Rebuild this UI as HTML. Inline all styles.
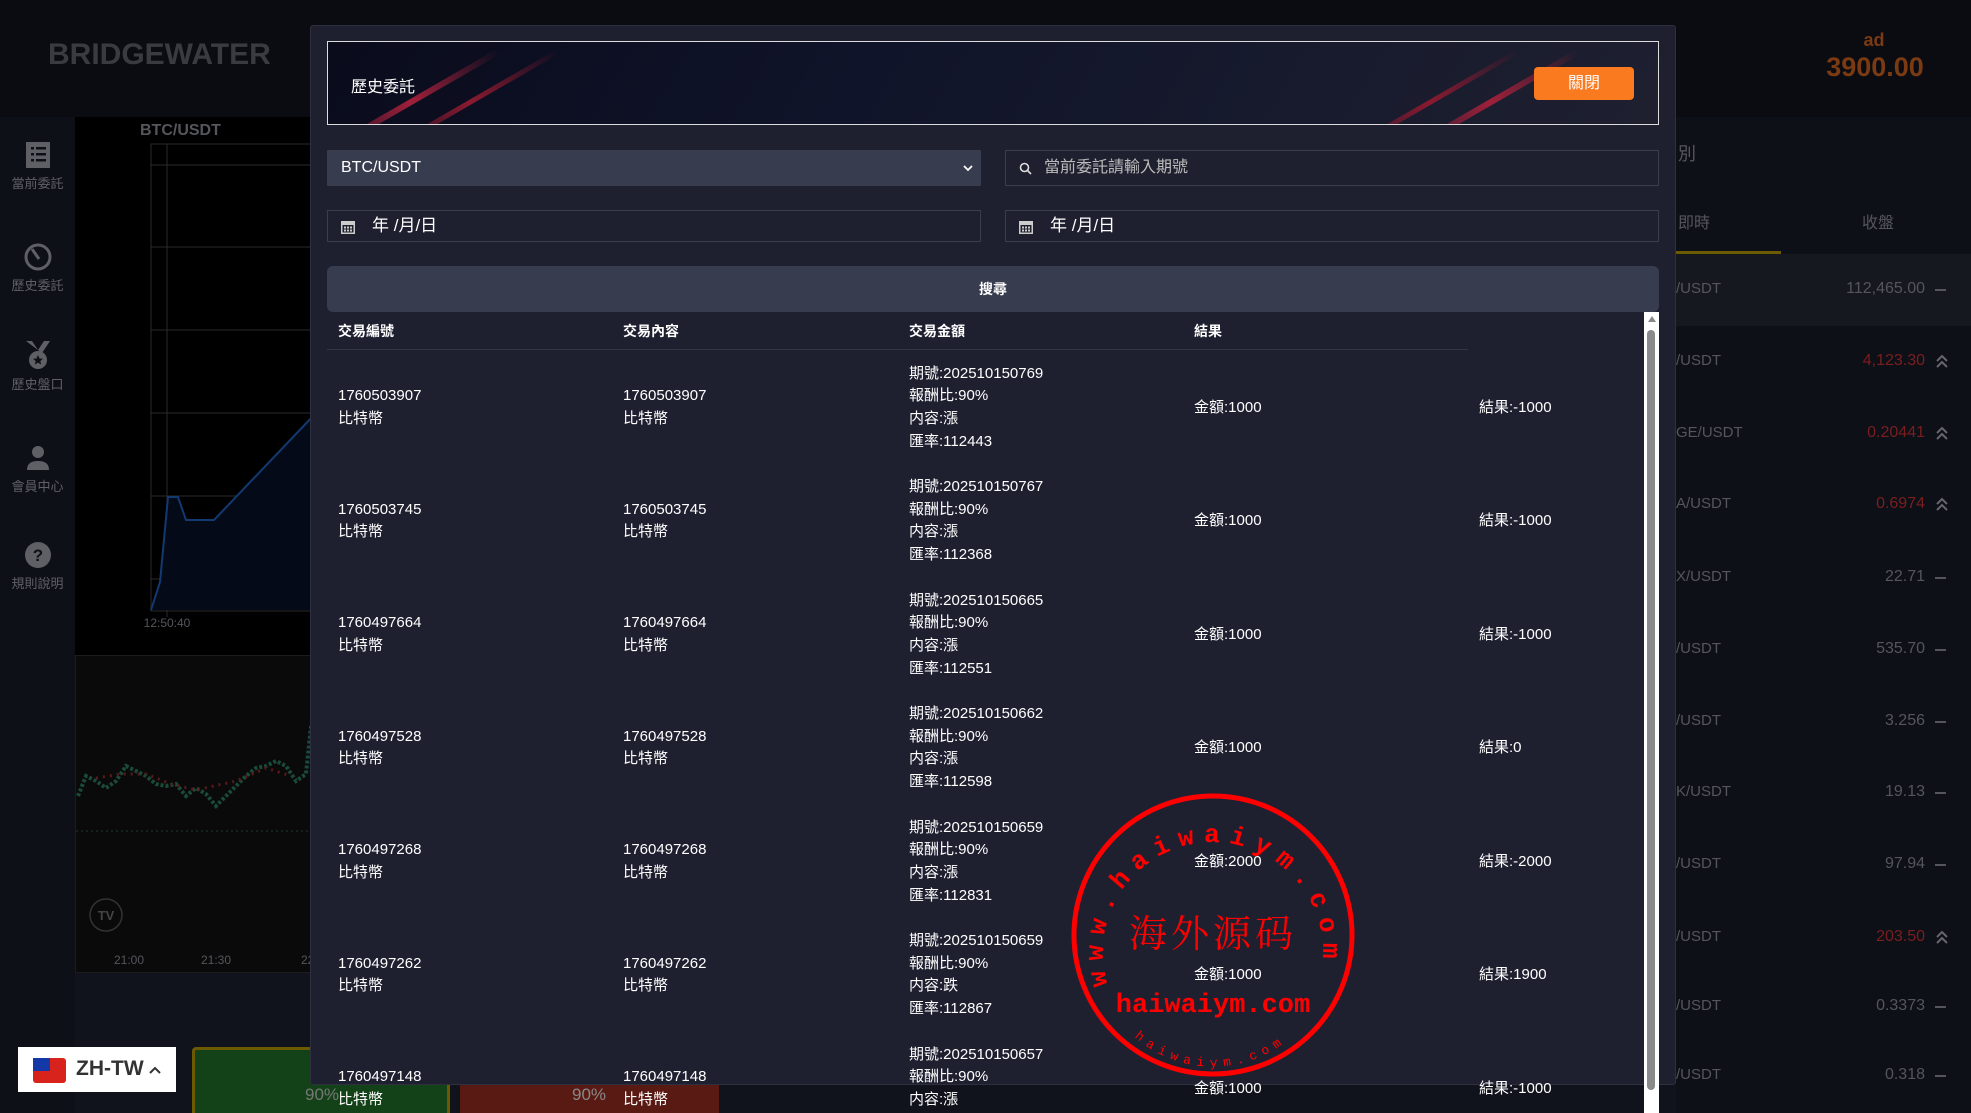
<!DOCTYPE html>
<html><head><meta charset="utf-8"><style>
*{margin:0;padding:0;box-sizing:border-box}
html,body{width:1971px;height:1113px;overflow:hidden}
body{background:#11131c;font-family:"Liberation Sans","Noto Sans CJK TC",sans-serif;position:relative;color:#fff}
.a{position:absolute}
.side{left:0;top:117px;width:75px;height:996px;background:#0e1018}
.si{position:absolute;left:0;width:75px;text-align:center;color:#5f6066;font-size:13px}
.t{font-size:15px;color:#fff;position:absolute;white-space:nowrap;line-height:22.6px}
.rp{color:#55565c;font-size:15px;position:absolute}
</style></head><body>
<div class="a" style="left:0;top:0;width:1971px;height:117px;background:#0b0c12"></div>
<div class="a" style="left:48px;top:38px;font-size:30px;font-weight:bold;color:#3a3b40">BRIDGEWATER</div>
<div class="a" style="left:1830px;top:30px;width:88px;text-align:center;color:#7a3a12;font-weight:bold;font-size:18px">ad</div>
<div class="a" style="left:1820px;top:52px;width:110px;text-align:center;color:#7a3a12;font-weight:bold;font-size:27px">3900.00</div>
<div class="a side"></div>
<div class="si" style="top:142px"><svg width="28" height="28"><rect x="2" y="0" width="24" height="26" fill="#5f6066"/><g fill="#0e1018"><rect x="7" y="5" width="3" height="2.5"/><rect x="12" y="5" width="10" height="2.5"/><rect x="7" y="11" width="3" height="2.5"/><rect x="12" y="11" width="10" height="2.5"/><rect x="7" y="17" width="3" height="2.5"/><rect x="12" y="17" width="10" height="2.5"/></g></svg><div>當前委託</div></div>
<div class="si" style="top:242px"><svg width="30" height="30"><circle cx="15" cy="15" r="12" fill="none" stroke="#5f6066" stroke-width="3"/><path d="M9 7 L16 17" stroke="#5f6066" stroke-width="3"/></svg><div>歷史委託</div></div>
<div class="si" style="top:341px"><svg width="30" height="30"><path d="M3 0h6l6 9 6-9h6l-8 12z" fill="#5f6066"/><circle cx="15" cy="19" r="9" fill="#5f6066"/><path d="M15 14l1.5 3.5 3.5.3-2.7 2.3.9 3.5-3.2-2-3.2 2 .9-3.5-2.7-2.3 3.5-.3z" fill="#0e1018"/></svg><div>歷史盤口</div></div>
<div class="si" style="top:443px"><svg width="30" height="30"><circle cx="15" cy="9" r="6" fill="#5f6066"/><path d="M4 27c0-7 5-9 11-9s11 2 11 9z" fill="#5f6066"/></svg><div>會員中心</div></div>
<div class="si" style="top:540px"><svg width="30" height="30"><circle cx="15" cy="15" r="13" fill="#5f6066"/><text x="15" y="21" text-anchor="middle" font-size="17" font-weight="bold" fill="#0e1018" font-family="Liberation Sans">?</text></svg><div>規則說明</div></div>
<div class="a" style="left:75px;top:117px;width:240px;height:538px;background:#000"></div>
<div class="a" style="left:140px;top:122px;color:#55565c;font-weight:bold;font-size:16px">BTC/USDT</div>
<svg class="a" style="left:75px;top:117px" width="240" height="530">
<g stroke="#2a2a2a" fill="none"><rect x="76" y="27" width="170" height="467"/><line x1="92" y1="27" x2="92" y2="500"/>
<line x1="76" y1="48" x2="246" y2="48"/><line x1="76" y1="130" x2="246" y2="130"/><line x1="76" y1="213" x2="246" y2="213"/><line x1="76" y1="296" x2="246" y2="296"/><line x1="76" y1="379" x2="246" y2="379"/><line x1="76" y1="462" x2="246" y2="462"/></g>
<path d="M76 493 L85 465 L93 380 L103 380 L111 403 L139 403 L240 297 L240 493Z" fill="#050a18"/>
<path d="M76 493 L85 465 L93 380 L103 380 L111 403 L139 403 L240 297" fill="none" stroke="#123a70" stroke-width="2"/>
<text x="92" y="510" fill="#55565c" font-size="12" text-anchor="middle" font-family="Liberation Sans">12:50:40</text></svg>
<div class="a" style="left:75px;top:655px;width:240px;height:318px;background:#0a0a0a;border:1px solid #1c1c1c"></div>
<svg class="a" style="left:76px;top:656px" width="235" height="316">
<polyline points="2,140 10,120 20,125 30,132 40,125 50,110 60,115 70,120 80,128 90,130 100,128 110,140 120,132 130,138 140,150 150,140 160,130 170,120 180,112 190,110 200,105 210,110 220,125 230,118 235,70" fill="none" stroke="#1a4a3a" stroke-width="4" stroke-dasharray="3 2"/>
<polyline points="20,122 45,118 70,118 95,128 120,134 160,125 190,112 215,120" fill="none" stroke="#5a1a1a" stroke-width="3" stroke-dasharray="2 5"/>
<line x1="0" y1="175" x2="235" y2="175" stroke="#1a3a30" stroke-dasharray="2 3"/>
<circle cx="30" cy="259" r="16" fill="none" stroke="#333" stroke-width="1.5"/><text x="30" y="264" text-anchor="middle" fill="#444" font-size="13" font-weight="bold" font-family="Liberation Sans">TV</text>
<text x="53" y="308" fill="#55565c" font-size="12" text-anchor="middle" font-family="Liberation Sans">21:00</text><text x="140" y="308" fill="#55565c" font-size="12" text-anchor="middle" font-family="Liberation Sans">21:30</text><text x="225" y="308" fill="#55565c" font-size="12" font-family="Liberation Sans">22:0</text></svg>
<div class="a" style="left:192px;top:1047px;width:258px;height:70px;background:#144218;border:3px solid #6b5a00;border-radius:4px"></div>
<div class="a" style="left:460px;top:1047px;width:259px;height:70px;background:#5a1a14;border-radius:4px"></div>
<div class="a" style="left:305px;top:1085px;color:#777;font-size:17px">90%</div>
<div class="a" style="left:572px;top:1085px;color:#888;font-size:17px">90%</div>
<div class="a" style="left:18px;top:1047px;width:158px;height:45px;background:#fff"></div>
<div class="a" style="left:33px;top:1058px;width:33px;height:25px;background:#d8231c;border-radius:3px"><div style="width:17px;height:13px;background:#1438a8"></div></div>
<div class="a" style="left:76px;top:1057px;color:#333;font-weight:bold;font-size:21px">ZH-TW</div>
<svg class="a" style="left:148px;top:1065px" width="14" height="10"><path d="M2 8L7 3L12 8" fill="none" stroke="#333" stroke-width="2"/></svg>
<div class="a" style="left:1676px;top:117px;width:295px;height:996px;background:#0e1018"></div>
<div class="a" style="left:1678px;top:140px;color:#55565c;font-size:18px">別</div>
<div class="a" style="left:1678px;top:209px;color:#55565c;font-size:16px">即時</div>
<div class="a" style="left:1862px;top:209px;color:#55565c;font-size:16px">收盤</div>
<div class="a" style="left:1676px;top:251px;width:105px;height:3px;background:#6b5a00"></div>
<div class="a" style="left:1676px;top:254px;width:295px;height:72px;background:#16181f"></div>
<div id="rp"></div>
<div class="a" style="left:310px;top:25px;width:1366px;height:1060px;background:#1e2030;border:1px solid #2e3040;border-radius:3px"></div>
<div class="a" style="left:327px;top:41px;width:1332px;height:84px;border:1.5px solid #ddd;background:linear-gradient(120deg,#0a0c1c 0%,#10142a 40%,#1e2030 100%);overflow:hidden">
<div style="position:absolute;left:80px;top:-40px;width:6px;height:200px;background:linear-gradient(#0000,#a0203a,#0000);transform:rotate(60deg)"></div>
<div style="position:absolute;left:140px;top:-40px;width:5px;height:200px;background:linear-gradient(#0000,#8a1a30,#0000);transform:rotate(60deg)"></div>
<div style="position:absolute;left:1100px;top:-40px;width:5px;height:200px;background:linear-gradient(#0000,#8a1a30,#0000);transform:rotate(60deg)"></div>
<div style="position:absolute;left:1160px;top:-40px;width:6px;height:200px;background:linear-gradient(#0000,#a0203a,#0000);transform:rotate(60deg)"></div>
</div>
<div class="a" style="left:351px;top:73px;font-size:16px">歷史委託</div>
<div class="a" style="left:1534px;top:67px;width:100px;height:33px;background:#f97a1f;border-radius:4px;text-align:center;line-height:33px;font-size:16px">關閉</div>
<div class="a" style="left:327px;top:150px;width:654px;height:36px;background:#383c4f;font-size:16px;line-height:36px;padding-left:14px">BTC/USDT<svg style="position:absolute;right:8px;top:15px" width="10" height="7"><path d="M1 1L5 5L9 1" fill="none" stroke="#fff" stroke-width="1.8"/></svg></div>
<div class="a" style="left:1005px;top:150px;width:654px;height:36px;border:1px solid #3a3d50;font-size:16px;line-height:34px;padding-left:38px;color:#bbb">當前委託請輸入期號
<svg style="position:absolute;left:13px;top:11px" width="13" height="13"><circle cx="5.5" cy="5.5" r="4" fill="none" stroke="#ddd" stroke-width="1.6"/><path d="M8.5 8.5L12 12" stroke="#ddd" stroke-width="1.6"/></svg></div>
<div class="a" style="left:327px;top:210px;width:654px;height:32px;border:1px solid #3a3d50;font-size:17px;line-height:30px;padding-left:44px">年 /月/日<svg style="position:absolute;left:13px;top:8px" width="14" height="15"><rect x="0" y="2" width="14" height="13" fill="#ccc"/><g fill="#1e2030"><rect x="1.5" y="6" width="11" height="7.5"/></g><g fill="#ccc"><rect x="3" y="7.5" width="2" height="2"/><rect x="6" y="7.5" width="2" height="2"/><rect x="9" y="7.5" width="2" height="2"/><rect x="3" y="10.5" width="2" height="2"/><rect x="6" y="10.5" width="2" height="2"/><rect x="9" y="10.5" width="2" height="2"/></g></svg></div>
<div class="a" style="left:1005px;top:210px;width:654px;height:32px;border:1px solid #3a3d50;font-size:17px;line-height:30px;padding-left:44px">年 /月/日<svg style="position:absolute;left:13px;top:8px" width="14" height="15"><rect x="0" y="2" width="14" height="13" fill="#ccc"/><g fill="#1e2030"><rect x="1.5" y="6" width="11" height="7.5"/></g><g fill="#ccc"><rect x="3" y="7.5" width="2" height="2"/><rect x="6" y="7.5" width="2" height="2"/><rect x="9" y="7.5" width="2" height="2"/><rect x="3" y="10.5" width="2" height="2"/><rect x="6" y="10.5" width="2" height="2"/><rect x="9" y="10.5" width="2" height="2"/></g></svg></div>
<div class="a" style="left:327px;top:266px;width:1332px;height:46px;background:#383c4f;border-radius:6px;text-align:center;line-height:46px;font-size:14px;font-weight:bold">搜尋</div>
<div class="a" style="left:1644px;top:312px;width:15px;height:801px;background:#fff"><div style="position:absolute;left:4px;top:4px;border:4px solid transparent;border-bottom:6px solid #888;border-top:0"></div><div style="position:absolute;left:3px;top:18px;width:8px;height:760px;background:#8a8a8a;border-radius:4px"></div></div>
<div class="a" style="left:327px;top:349px;width:1141px;height:1px;background:#33364a"></div>
<div id="tb"></div>
<svg class="a" style="left:1068px;top:790px" width="290" height="290" viewBox="0 0 290 290">
<defs><path id="c1" d="M40 195 A110 110 0 1 1 250 195"/><path id="c2" d="M55 235 A118 118 0 0 0 235 235"/></defs>
<circle cx="145" cy="145" r="139" fill="none" stroke="#f00" stroke-width="5"/>
<text fill="#f00" font-size="26" font-weight="bold" font-family="Liberation Mono" letter-spacing="9"><textPath href="#c1">www.haiwaiym.com</textPath></text>
<text fill="#f00" font-size="13" font-family="Liberation Mono" letter-spacing="6"><textPath href="#c2" startOffset="8%">haiwaiym.com</textPath></text>
<text x="145" y="157" text-anchor="middle" fill="#f00" font-size="38" font-family="Noto Serif CJK SC,serif" letter-spacing="4">海外源码</text>
<text x="145" y="222" text-anchor="middle" fill="#f00" font-size="27" font-weight="bold" font-family="Liberation Mono">haiwaiym.com</text>
</svg>
<script>
var h='';
[['交易編號',338],['交易內容',623],['交易金額',909],['結果',1194]].forEach(function(c){h+='<div class="t" style="left:'+c[1]+'px;top:320px;font-size:14px;font-weight:bold">'+c[0]+'</div>'});
var d=[['1760503907','769','漲','112443','1000','-1000'],['1760503745','767','漲','112368','1000','-1000'],['1760497664','665','漲','112551','1000','-1000'],['1760497528','662','漲','112598','1000','0'],['1760497268','659','漲','112831','2000','-2000'],['1760497262','659','跌','112867','1000','1900'],['1760497148','657','漲','112900','1000','-1000']];
d.forEach(function(r,i){var y=408+i*113.5;
h+='<div class="t" style="left:338px;top:'+(y-22.6)+'px">'+r[0]+'<br>比特幣</div>';
h+='<div class="t" style="left:623px;top:'+(y-22.6)+'px">'+r[0]+'<br>比特幣</div>';
h+='<div class="t" style="left:909px;top:'+(y-45.2)+'px">期號:202510150'+r[1]+'<br>報酬比:90%<br>内容:'+r[2]+'<br>匯率:'+r[3]+'</div>';
h+='<div class="t" style="left:1194px;top:'+(y-11.3)+'px">金額:'+r[4]+'</div>';
h+='<div class="t" style="left:1479px;top:'+(y-11.3)+'px">結果:'+r[5]+'</div>';});
document.getElementById('tb').outerHTML=h;
var p=[['/USDT','112,465.00',0],['/USDT','4,123.30',1],['GE/USDT','0.20441',1],['A/USDT','0.6974',1],['X/USDT','22.71',0],['/USDT','535.70',0],['/USDT','3.256',0],['K/USDT','19.13',0],['/USDT','97.94',0],['/USDT','203.50',1],['/USDT','0.3373',0],['/USDT','0.318',0]];
var ys=[290,362,434,505,578,650,722,793,865,938,1007,1076],g='';
p.forEach(function(r,i){var y=ys[i]-10;
g+='<div class="rp" style="left:1676px;top:'+y+'px">'+r[0]+'</div>';
g+='<div class="rp" style="right:46px;top:'+y+'px;font-size:16px;color:'+(r[2]?'#7a1e1e':'#55565c')+'">'+r[1]+'</div>';
g+=r[2]?'<svg class="a" style="left:1935px;top:'+(y+1)+'px" width="14" height="16"><path d="M2 8L7 3L12 8M2 14L7 9L12 14" fill="none" stroke="#66676c" stroke-width="2"/></svg>':'<div class="a" style="left:1935px;top:'+(y+9)+'px;width:11px;height:2px;background:#55565c"></div>';});
document.getElementById('rp').outerHTML=g;
</script>
</body></html>
